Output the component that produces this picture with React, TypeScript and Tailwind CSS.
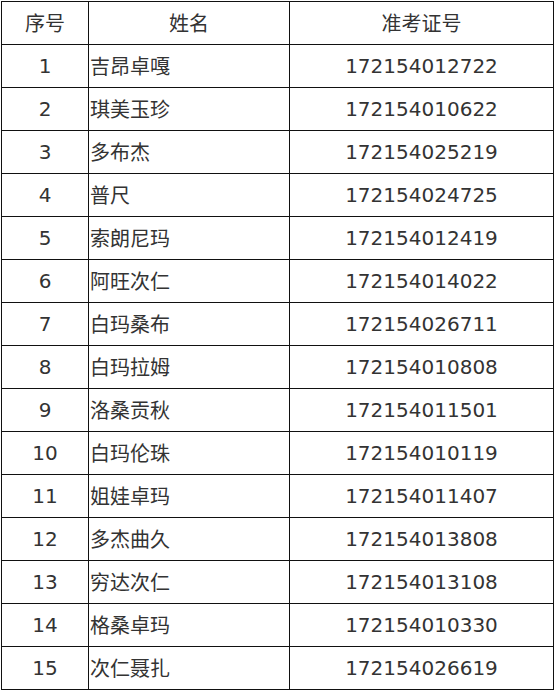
const rows: [number, string, string][] = [
  [1, '吉昂卓嘎', '172154012722'],
  [2, '琪美玉珍', '172154010622'],
  [3, '多布杰', '172154025219'],
  [4, '普尺', '172154024725'],
  [5, '索朗尼玛', '172154012419'],
  [6, '阿旺次仁', '172154014022'],
  [7, '白玛桑布', '172154026711'],
  [8, '白玛拉姆', '172154010808'],
  [9, '洛桑贡秋', '172154011501'],
  [10, '白玛伦珠', '172154010119'],
  [11, '姐娃卓玛', '172154011407'],
  [12, '多杰曲久', '172154013808'],
  [13, '穷达次仁', '172154013108'],
  [14, '格桑卓玛', '172154010330'],
  [15, '次仁聂扎', '172154026619'],
];

const cell = 'h-[43px] border-r border-b border-[#111] flex items-center';
const num = "font-['DejaVu_Sans',Tahoma,sans-serif]";
const cjk = "font-['Noto_Sans_CJK_SC','Noto_Sans',sans-serif]";

export default function App() {
  return (
    <div className="w-[554px] h-[691px] bg-white pt-px pl-px text-[20px] text-[#333]">
      <div className="grid grid-cols-[87px_201px_264px] w-[553px] border-l border-t border-[#111]">
        <div className={`${cell} ${cjk} justify-center`}>序号</div>
        <div className={`${cell} ${cjk} justify-center`}>姓名</div>
        <div className={`${cell} ${cjk} justify-center`}>准考证号</div>
        {rows.map(([n, name, id]) => (
          <div key={n} className="contents">
            <div className={`${cell} ${num} justify-center`}>{n}</div>
            <div className={`${cell} ${cjk} pl-px`}>{name}</div>
            <div className={`${cell} ${num} justify-center`}>{id}</div>
          </div>
        ))}
      </div>
    </div>
  );
}
